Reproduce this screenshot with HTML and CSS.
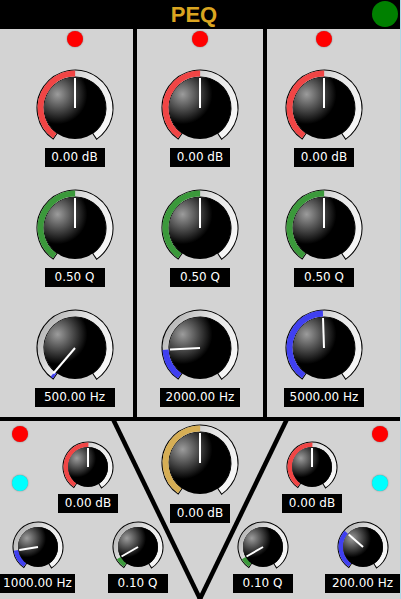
FILE: index.html
```html
<!DOCTYPE html>
<html>
<head>
<meta charset="utf-8">
<title>PEQ</title>
<link rel="stylesheet" href="styles.css">
</head>
<body>
<svg class="defs" width="0" height="0" aria-hidden="true">
  <defs>
    <radialGradient id="kg" cx="0.22" cy="0.28" r="0.48">
      <stop offset="0" stop-color="#9c9c9c"/>
      <stop offset="1" stop-color="#000"/>
    </radialGradient>
    <linearGradient id="tg" x1="0" y1="0" x2="0" y2="1">
      <stop offset="0" stop-color="#f6f6f6"/>
      <stop offset="0.6" stop-color="#e6e6e6"/>
      <stop offset="1" stop-color="#bcbcbc"/>
    </linearGradient>
  </defs>
</svg>
<div class="app">
  <header class="header">
    <h1 class="title">PEQ</h1>
    <span class="power"></span>
  </header>

  <section class="bands">
    <div class="band band-1">
      <span class="led led-red"></span>
      <div class="unit">
        <svg class="knob lg" viewBox="0 0 80 80" width="80" height="80">
          <circle class="arc-o" cx="40" cy="40" r="34.5" stroke-dasharray="175.4 400" transform="rotate(124.3 40 40)"/>
          <circle class="arc-t" cx="40" cy="40" r="34.5" stroke-dasharray="173.4 400" transform="rotate(126 40 40)"/>
          <circle class="arc-v c-red" cx="40" cy="40" r="34.5" stroke-dasharray="86.7 400" transform="rotate(126 40 40)"/>
          <circle class="cap" cx="40" cy="40" r="31"/>
          <line class="ptr" x1="40" y1="40" x2="40" y2="10"/>
        </svg>
        <div class="val">0.00 dB</div>
      </div>
      <div class="unit">
        <svg class="knob lg" viewBox="0 0 80 80" width="80" height="80">
          <circle class="arc-o" cx="40" cy="40" r="34.5" stroke-dasharray="175.4 400" transform="rotate(124.3 40 40)"/>
          <circle class="arc-t" cx="40" cy="40" r="34.5" stroke-dasharray="173.4 400" transform="rotate(126 40 40)"/>
          <circle class="arc-v c-green" cx="40" cy="40" r="34.5" stroke-dasharray="86.7 400" transform="rotate(126 40 40)"/>
          <circle class="cap" cx="40" cy="40" r="31"/>
          <line class="ptr" x1="40" y1="40" x2="40" y2="10"/>
        </svg>
        <div class="val">0.50 Q</div>
      </div>
      <div class="unit">
        <svg class="knob lg" viewBox="0 0 80 80" width="80" height="80">
          <circle class="arc-o" cx="40" cy="40" r="34.5" stroke-dasharray="175.4 400" transform="rotate(124.3 40 40)"/>
          <circle class="arc-t" cx="40" cy="40" r="34.5" stroke-dasharray="173.4 400" transform="rotate(126 40 40)"/>
          <circle class="arc-v c-blue" cx="40" cy="40" r="34.5" stroke-dasharray="2.7 400" transform="rotate(126 40 40)"/>
          <circle class="cap" cx="40" cy="40" r="31"/>
          <line class="ptr" x1="40" y1="40" x2="18.3" y2="65.5"/>
        </svg>
        <div class="val hz">500.00 Hz</div>
      </div>
    </div>

    <div class="band band-2">
      <span class="led led-red"></span>
      <div class="unit">
        <svg class="knob lg" viewBox="0 0 80 80" width="80" height="80">
          <circle class="arc-o" cx="40" cy="40" r="34.5" stroke-dasharray="175.4 400" transform="rotate(124.3 40 40)"/>
          <circle class="arc-t" cx="40" cy="40" r="34.5" stroke-dasharray="173.4 400" transform="rotate(126 40 40)"/>
          <circle class="arc-v c-red" cx="40" cy="40" r="34.5" stroke-dasharray="86.7 400" transform="rotate(126 40 40)"/>
          <circle class="cap" cx="40" cy="40" r="31"/>
          <line class="ptr" x1="40" y1="40" x2="40" y2="10"/>
        </svg>
        <div class="val">0.00 dB</div>
      </div>
      <div class="unit">
        <svg class="knob lg" viewBox="0 0 80 80" width="80" height="80">
          <circle class="arc-o" cx="40" cy="40" r="34.5" stroke-dasharray="175.4 400" transform="rotate(124.3 40 40)"/>
          <circle class="arc-t" cx="40" cy="40" r="34.5" stroke-dasharray="173.4 400" transform="rotate(126 40 40)"/>
          <circle class="arc-v c-green" cx="40" cy="40" r="34.5" stroke-dasharray="86.7 400" transform="rotate(126 40 40)"/>
          <circle class="cap" cx="40" cy="40" r="31"/>
          <line class="ptr" x1="40" y1="40" x2="40" y2="10"/>
        </svg>
        <div class="val">0.50 Q</div>
      </div>
      <div class="unit">
        <svg class="knob lg" viewBox="0 0 80 80" width="80" height="80">
          <circle class="arc-o" cx="40" cy="40" r="34.5" stroke-dasharray="175.4 400" transform="rotate(124.3 40 40)"/>
          <circle class="arc-t" cx="40" cy="40" r="34.5" stroke-dasharray="173.4 400" transform="rotate(126 40 40)"/>
          <circle class="arc-v c-blue" cx="40" cy="40" r="34.5" stroke-dasharray="30.7 400" transform="rotate(126 40 40)"/>
          <circle class="cap" cx="40" cy="40" r="31"/>
          <line class="ptr" x1="40" y1="40" x2="10" y2="41.6"/>
        </svg>
        <div class="val hz">2000.00 Hz</div>
      </div>
    </div>

    <div class="band band-3">
      <span class="led led-red"></span>
      <div class="unit">
        <svg class="knob lg" viewBox="0 0 80 80" width="80" height="80">
          <circle class="arc-o" cx="40" cy="40" r="34.5" stroke-dasharray="175.4 400" transform="rotate(124.3 40 40)"/>
          <circle class="arc-t" cx="40" cy="40" r="34.5" stroke-dasharray="173.4 400" transform="rotate(126 40 40)"/>
          <circle class="arc-v c-red" cx="40" cy="40" r="34.5" stroke-dasharray="86.7 400" transform="rotate(126 40 40)"/>
          <circle class="cap" cx="40" cy="40" r="31"/>
          <line class="ptr" x1="40" y1="40" x2="40" y2="10"/>
        </svg>
        <div class="val">0.00 dB</div>
      </div>
      <div class="unit">
        <svg class="knob lg" viewBox="0 0 80 80" width="80" height="80">
          <circle class="arc-o" cx="40" cy="40" r="34.5" stroke-dasharray="175.4 400" transform="rotate(124.3 40 40)"/>
          <circle class="arc-t" cx="40" cy="40" r="34.5" stroke-dasharray="173.4 400" transform="rotate(126 40 40)"/>
          <circle class="arc-v c-green" cx="40" cy="40" r="34.5" stroke-dasharray="86.7 400" transform="rotate(126 40 40)"/>
          <circle class="cap" cx="40" cy="40" r="31"/>
          <line class="ptr" x1="40" y1="40" x2="40" y2="10"/>
        </svg>
        <div class="val">0.50 Q</div>
      </div>
      <div class="unit">
        <svg class="knob lg" viewBox="0 0 80 80" width="80" height="80">
          <circle class="arc-o" cx="40" cy="40" r="34.5" stroke-dasharray="175.4 400" transform="rotate(124.3 40 40)"/>
          <circle class="arc-t" cx="40" cy="40" r="34.5" stroke-dasharray="173.4 400" transform="rotate(126 40 40)"/>
          <circle class="arc-v c-blue" cx="40" cy="40" r="34.5" stroke-dasharray="85.5 400" transform="rotate(126 40 40)"/>
          <circle class="cap" cx="40" cy="40" r="31"/>
          <line class="ptr" x1="40" y1="40" x2="39" y2="10"/>
        </svg>
        <div class="val hz">5000.00 Hz</div>
      </div>
    </div>
  </section>

  <section class="shelves">
    <svg class="vlines" viewBox="0 0 400 178" width="400" height="178" aria-hidden="true">
      <line x1="112" y1="-4" x2="202" y2="182"/>
      <line x1="288" y1="-4" x2="198" y2="182"/>
    </svg>

    <div class="leds leds-l">
      <span class="led led-red"></span>
      <span class="led led-cyan"></span>
    </div>

    <div class="cell db-l">
      <svg class="knob sm" viewBox="0 0 54 54" width="54" height="54">
        <circle class="arc-o" cx="27" cy="27" r="22.5" stroke-dasharray="115.1 400" transform="rotate(123.45 27 27)"/>
        <circle class="arc-t" cx="27" cy="27" r="22.25" stroke-dasharray="111.84 400" transform="rotate(126 27 27)"/>
        <circle class="arc-v c-red" cx="27" cy="27" r="22.25" stroke-dasharray="55.92 400" transform="rotate(126 27 27)"/>
        <circle class="cap" cx="27" cy="27" r="20"/>
        <line class="ptr" x1="27" y1="27" x2="27" y2="8"/>
      </svg>
      <div class="val">0.00 dB</div>
    </div>

    <div class="cell master">
      <svg class="knob lg" viewBox="0 0 80 80" width="80" height="80">
        <circle class="arc-o" cx="40" cy="40" r="34.5" stroke-dasharray="175.4 400" transform="rotate(124.3 40 40)"/>
        <circle class="arc-t" cx="40" cy="40" r="34.5" stroke-dasharray="173.4 400" transform="rotate(126 40 40)"/>
        <circle class="arc-v c-gold" cx="40" cy="40" r="34.5" stroke-dasharray="86.7 400" transform="rotate(126 40 40)"/>
        <circle class="cap" cx="40" cy="40" r="31"/>
        <line class="ptr" x1="40" y1="40" x2="40" y2="10"/>
      </svg>
      <div class="val">0.00 dB</div>
    </div>

    <div class="cell db-r">
      <svg class="knob sm" viewBox="0 0 54 54" width="54" height="54">
        <circle class="arc-o" cx="27" cy="27" r="22.5" stroke-dasharray="115.1 400" transform="rotate(123.45 27 27)"/>
        <circle class="arc-t" cx="27" cy="27" r="22.25" stroke-dasharray="111.84 400" transform="rotate(126 27 27)"/>
        <circle class="arc-v c-red" cx="27" cy="27" r="22.25" stroke-dasharray="55.92 400" transform="rotate(126 27 27)"/>
        <circle class="cap" cx="27" cy="27" r="20"/>
        <line class="ptr" x1="27" y1="27" x2="27" y2="8"/>
      </svg>
      <div class="val">0.00 dB</div>
    </div>

    <div class="leds leds-r">
      <span class="led led-red"></span>
      <span class="led led-cyan"></span>
    </div>

    <div class="cell hz-l">
      <svg class="knob sm" viewBox="0 0 54 54" width="54" height="54">
        <circle class="arc-o" cx="27" cy="27" r="22.5" stroke-dasharray="115.1 400" transform="rotate(123.45 27 27)"/>
        <circle class="arc-t" cx="27" cy="27" r="22.25" stroke-dasharray="111.84 400" transform="rotate(126 27 27)"/>
        <circle class="arc-v c-blue" cx="27" cy="27" r="22.25" stroke-dasharray="17.48 400" transform="rotate(126 27 27)"/>
        <circle class="cap" cx="27" cy="27" r="20"/>
        <line class="ptr" x1="27" y1="27" x2="8.2" y2="30"/>
      </svg>
      <div class="val hz-sm">1000.00 Hz</div>
    </div>

    <div class="cell q-l">
      <svg class="knob sm" viewBox="0 0 54 54" width="54" height="54">
        <circle class="arc-o" cx="27" cy="27" r="22.5" stroke-dasharray="115.1 400" transform="rotate(123.45 27 27)"/>
        <circle class="arc-t" cx="27" cy="27" r="22.25" stroke-dasharray="111.84 400" transform="rotate(126 27 27)"/>
        <circle class="arc-v c-green" cx="27" cy="27" r="22.25" stroke-dasharray="9.3 400" transform="rotate(126 27 27)"/>
        <circle class="cap" cx="27" cy="27" r="20"/>
        <line class="ptr" x1="27" y1="27" x2="10.5" y2="36.5"/>
      </svg>
      <div class="val">0.10 Q</div>
    </div>

    <div class="cell q-r">
      <svg class="knob sm" viewBox="0 0 54 54" width="54" height="54">
        <circle class="arc-o" cx="27" cy="27" r="22.5" stroke-dasharray="115.1 400" transform="rotate(123.45 27 27)"/>
        <circle class="arc-t" cx="27" cy="27" r="22.25" stroke-dasharray="111.84 400" transform="rotate(126 27 27)"/>
        <circle class="arc-v c-green" cx="27" cy="27" r="22.25" stroke-dasharray="9.3 400" transform="rotate(126 27 27)"/>
        <circle class="cap" cx="27" cy="27" r="20"/>
        <line class="ptr" x1="27" y1="27" x2="10.5" y2="36.5"/>
      </svg>
      <div class="val">0.10 Q</div>
    </div>

    <div class="cell hz-r">
      <svg class="knob sm" viewBox="0 0 54 54" width="54" height="54">
        <circle class="arc-o" cx="27" cy="27" r="22.5" stroke-dasharray="115.1 400" transform="rotate(123.45 27 27)"/>
        <circle class="arc-t" cx="27" cy="27" r="22.25" stroke-dasharray="111.84 400" transform="rotate(126 27 27)"/>
        <circle class="arc-v c-blue" cx="27" cy="27" r="22.25" stroke-dasharray="36.89 400" transform="rotate(126 27 27)"/>
        <circle class="cap" cx="27" cy="27" r="20"/>
        <line class="ptr" x1="27" y1="27" x2="12.7" y2="14.5"/>
      </svg>
      <div class="val hz-sm">200.00 Hz</div>
    </div>
  </section>
</div>
</body>
</html>
```

FILE: styles.css
```css
html {
  background: #add8e6;
}

body {
  margin: 0;
  font-family: "DejaVu Sans", Verdana, sans-serif;
}

.defs {
  position: absolute;
  width: 0;
  height: 0;
  overflow: hidden;
}

.app {
  width: 400px;
  background: #d3d3d3;
}

/* header */
.header {
  position: relative;
  height: 29px;
  background: #000;
  display: flex;
  justify-content: center;
  padding-right: 12px;
}

.title {
  margin: 0;
  font-family: "Liberation Sans", Arial, sans-serif;
  font-weight: bold;
  font-size: 22px;
  line-height: 29px;
  color: #daa520;
}

.power {
  position: absolute;
  top: 1px;
  right: 2px;
  width: 26px;
  height: 26px;
  border-radius: 50%;
  background: #008000;
}

/* top bands */
.bands {
  display: flex;
  height: 388px;
}

.band {
  display: flex;
  flex-direction: column;
  align-items: center;
  gap: 21px;
  padding-top: 2px;
  box-sizing: border-box;
}

.band-1 {
  width: 133px;
  padding-left: 16px;
}

.band-2 {
  width: 134px;
  border-left: 4px solid #000;
  border-right: 4px solid #000;
}

.band-3 {
  width: 133px;
  padding-right: 19px;
}

.led {
  display: block;
  width: 16px;
  height: 16px;
  border-radius: 50%;
  box-shadow: 0 0 1.5px rgba(0, 0, 0, 0.5);
}

.led-red {
  background: #ff0000;
}

.led-cyan {
  background: #00ffff;
}

.unit {
  display: flex;
  flex-direction: column;
  align-items: center;
}

.knob {
  display: block;
}

.val {
  height: 19px;
  width: 60px;
  background: #000;
  color: #fff;
  font-size: 12px;
  line-height: 19px;
  text-align: center;
  white-space: nowrap;
}

.val.hz {
  width: 80px;
}

.val.hz-sm {
  width: 75px;
}

/* knob parts */
.arc-o {
  fill: none;
  stroke: #000;
}

.arc-t {
  fill: none;
  stroke: url(#tg);
}

.arc-v {
  fill: none;
}

.lg .arc-o {
  stroke-width: 8;
}

.lg .arc-t,
.lg .arc-v {
  stroke-width: 6;
}

.sm .arc-o {
  stroke-width: 6;
}

.sm .arc-t,
.sm .arc-v {
  stroke-width: 4.5;
}

.c-red {
  stroke: #f04545;
}

.c-green {
  stroke: #3b993b;
}

.c-blue {
  stroke: #4040f0;
}

.c-gold {
  stroke: #d6ae55;
}

.cap {
  fill: url(#kg);
}

.ptr {
  stroke: #fff;
  stroke-width: 2;
}

/* bottom shelves */
.shelves {
  position: relative;
  height: 178px;
  border-top: 4px solid #000;
  overflow: hidden;
  display: grid;
  grid-template-columns: 40px 35px 61px 64px 64px 61px 35px 40px;
  grid-template-rows: 99px 79px;
}

.vlines {
  position: absolute;
  top: 0;
  left: 0;
}

.vlines line {
  stroke: #000;
  stroke-width: 4.5;
}

.leds {
  grid-row: 1;
  display: flex;
  flex-direction: column;
  align-items: center;
  gap: 33px;
  padding-top: 5px;
}

.leds-l {
  grid-column: 1;
}

.leds-r {
  grid-column: 8;
}

.cell {
  display: flex;
  flex-direction: column;
  align-items: center;
}

.db-l {
  grid-column: 2 / 4;
  grid-row: 1;
  padding-top: 19px;
}

.db-r {
  grid-column: 6 / 8;
  grid-row: 1;
  padding-top: 19px;
}

.master {
  grid-column: 4 / 6;
  grid-row: 1 / 3;
  align-self: start;
  padding-top: 2px;
  gap: 1px;
}

.hz-l {
  grid-column: 1 / 3;
  grid-row: 2;
}

.q-l {
  grid-column: 3 / 5;
  grid-row: 2;
}

.q-r {
  grid-column: 5 / 7;
  grid-row: 2;
}

.hz-r {
  grid-column: 7 / 9;
  grid-row: 2;
}
```
